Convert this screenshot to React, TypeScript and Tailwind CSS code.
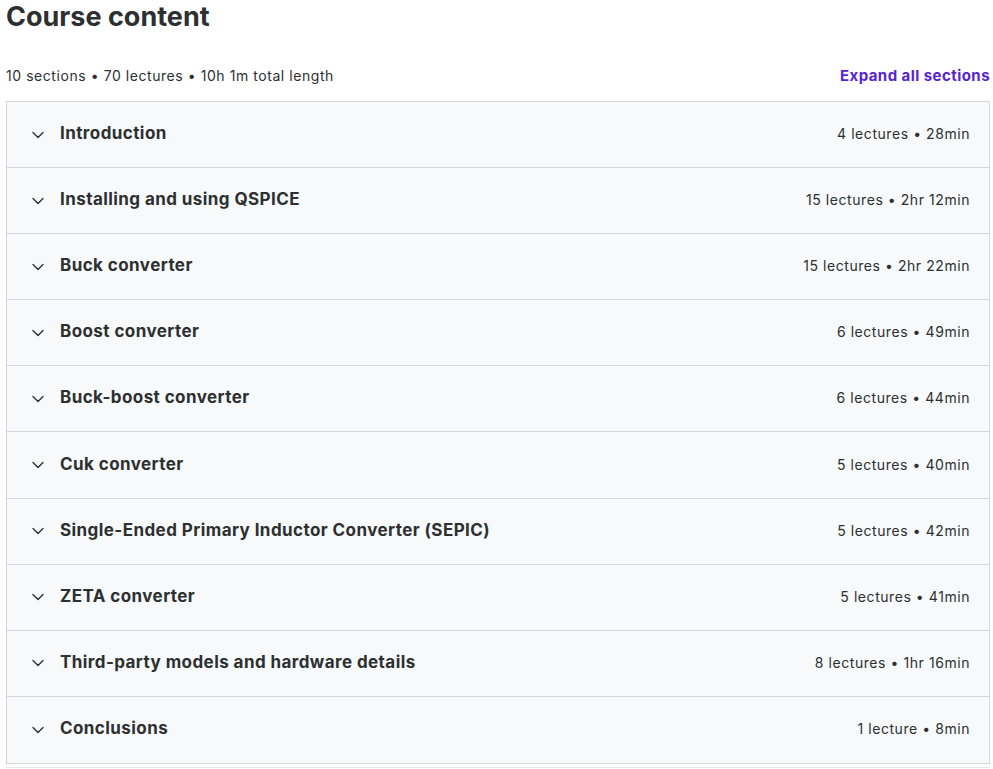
import { ChevronDown } from 'lucide-react';

const sections = [
  { title: 'Introduction', meta: '4 lectures • 28min' },
  { title: 'Installing and using QSPICE', meta: '15 lectures • 2hr 12min' },
  { title: 'Buck converter', meta: '15 lectures • 2hr 22min' },
  { title: 'Boost converter', meta: '6 lectures • 49min' },
  { title: 'Buck-boost converter', meta: '6 lectures • 44min' },
  { title: 'Cuk converter', meta: '5 lectures • 40min' },
  { title: 'Single-Ended Primary Inductor Converter (SEPIC)', meta: '5 lectures • 42min' },
  { title: 'ZETA converter', meta: '5 lectures • 41min' },
  { title: 'Third-party models and hardware details', meta: '8 lectures • 1hr 16min' },
  { title: 'Conclusions', meta: '1 lecture • 8min' },
];

export default function App() {
  return (
    <div
      className="min-h-screen bg-white pl-[6px] pr-[3px] text-[#2d2f31]"
      style={{ fontFamily: 'Inter, "Noto Sans", sans-serif' }}
    >
      <h2 className="h-[34px] text-[27px] font-bold leading-[34px]">Course content</h2>

      <div className="mt-[32px] flex h-[20px] items-center justify-between text-[14px] leading-[20px] tracking-[0.04em]">
        <span>10 sections • 70 lectures • 10h 1m total length</span>
        <button className="text-[15px] font-bold tracking-[0.03em] text-[#5624d0]">
          Expand all sections
        </button>
      </div>

      <div className="mt-[15px] w-[984px] border border-[#d1d7dc]">
        {sections.map((s, i) => (
          <div
            key={s.title}
            className={`flex h-[66.1px] items-center justify-between bg-[#f7f9fa] pl-[21px] pr-[19px] ${
              i < sections.length - 1 ? 'border-b border-[#d1d7dc]' : ''
            }`}
          >
            <div className="flex items-center gap-[12px] pb-[3px]">
              <ChevronDown size={20} strokeWidth={1.6} className="mt-[3px] text-[#2d2f31]" />
              <span className="text-[17px] font-bold leading-[24px] tracking-[0.025em]">
                {s.title}
              </span>
            </div>
            <span className="pb-[1px] text-[14px] leading-[20px] tracking-[0.04em]">{s.meta}</span>
          </div>
        ))}
      </div>

      <div className="mt-[3px] w-[984px] border-t border-[#e4e8eb]" />
    </div>
  );
}
